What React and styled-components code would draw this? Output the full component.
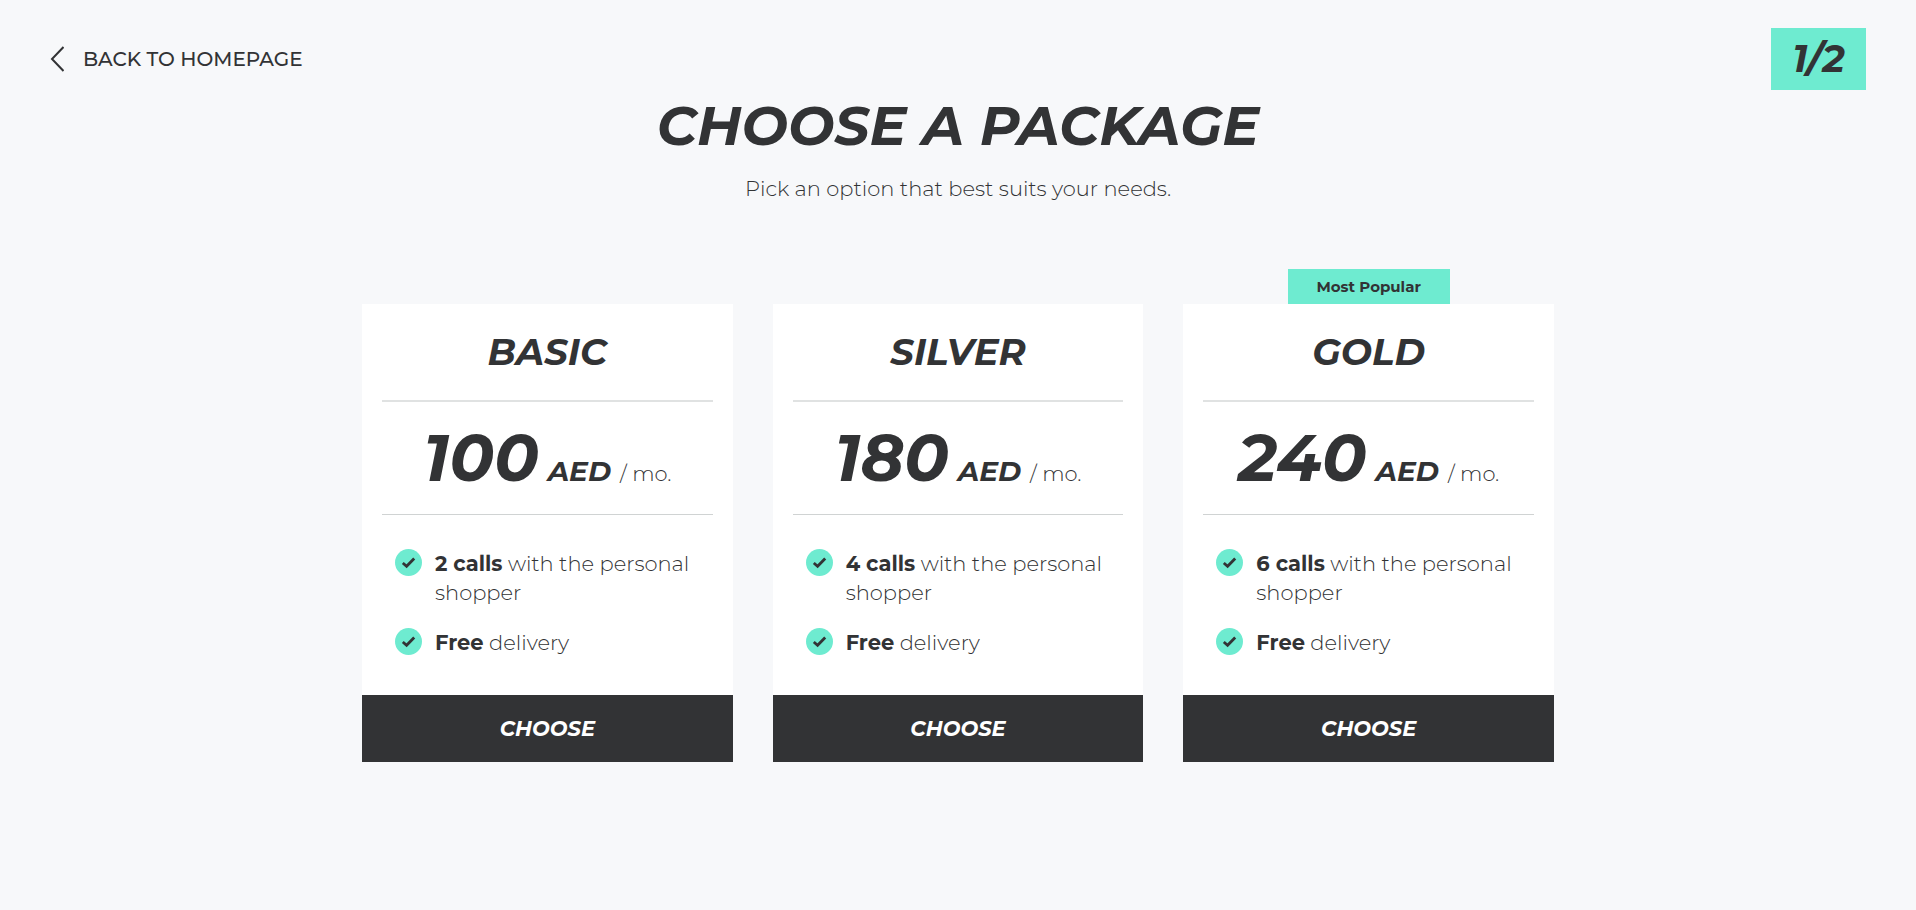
import React from "react";
import styled, { createGlobalStyle } from "styled-components";

const ink = "#323335";
const mint = "#6eebd0";

const GlobalStyle = createGlobalStyle`
  *, *::before, *::after { box-sizing: border-box; }
  body {
    margin: 0;
    background: #f7f8fa;
    color: ${ink};
    font-family: Montserrat, Inter, "Liberation Sans", sans-serif;
  }
`;

const Page = styled.div`
  min-height: 100vh;
  padding-bottom: 48px;
`;

const TopBar = styled.header`
  display: flex;
  justify-content: space-between;
  align-items: center;
  padding: 28px 50px 0;
`;

const BackLink = styled.a`
  display: flex;
  align-items: center;
  gap: 19px;
  color: ${ink};
  font-size: 20px;
  font-weight: 500;
  line-height: 28px;
  text-decoration: none;
`;

const StepBadge = styled.span`
  width: 95px;
  background: ${mint};
  font-size: 38px;
  font-style: italic;
  font-weight: 700;
  line-height: 62px;
  text-align: center;
`;

const Intro = styled.section`
  padding: 4px 24px 0;
  text-align: center;
`;

const Heading = styled.h1`
  margin: 0;
  font-size: 55px;
  font-style: italic;
  font-weight: 700;
  line-height: 64px;
`;

const Lead = styled.p`
  margin: 16px 0 0;
  font-size: 21px;
  font-weight: 300;
  line-height: 30px;
`;

const Packages = styled.main`
  display: grid;
  grid-template-columns: repeat(3, 1fr);
  gap: 40px;
  max-width: 1192px;
  margin: 100px auto 0;
`;

const Card = styled.article`
  position: relative;
  display: flex;
  flex-direction: column;
  background: #fff;
`;

const Ribbon = styled.span`
  position: absolute;
  bottom: 100%;
  left: 50%;
  width: 162px;
  transform: translateX(-50%);
  background: ${mint};
  font-size: 15px;
  font-weight: 700;
  line-height: 35px;
  text-align: center;
`;

const CardName = styled.h2`
  margin: 0 20px;
  border-bottom: 2px solid #e0e2e2;
  font-size: 37px;
  font-style: italic;
  font-weight: 700;
  line-height: 96px;
  text-align: center;
`;

const Price = styled.p`
  display: flex;
  justify-content: center;
  align-items: baseline;
  gap: 9px;
  margin: 0 20px;
  border-bottom: 1px solid #d0d3d3;
  line-height: 28px;
`;

const Amount = styled.strong`
  font-size: 66px;
  font-style: italic;
  font-weight: 700;
  line-height: 112px;
`;

const Currency = styled.strong`
  font-size: 28px;
  font-style: italic;
  font-weight: 700;
`;

const Period = styled.span`
  font-size: 21px;
  font-weight: 300;
`;

const Features = styled.ul`
  display: grid;
  flex: 1;
  align-content: start;
  gap: 21px;
  margin: 0;
  padding: 34px 33px 38px;
  list-style: none;
`;

const Feature = styled.li`
  display: flex;
  align-items: flex-start;
  gap: 13px;
  font-size: 21px;
  font-weight: 300;
  line-height: 29px;

  svg { flex: none; }
  strong { font-weight: 700; }
`;

const ChooseButton = styled.button`
  border: 0;
  padding: 0;
  background: ${ink};
  color: #fff;
  font-family: inherit;
  font-size: 21px;
  font-style: italic;
  font-weight: 700;
  line-height: 67px;
  cursor: pointer;
`;

const packages = [
  { name: "BASIC", price: 100, calls: 2 },
  { name: "SILVER", price: 180, calls: 4 },
  { name: "GOLD", price: 240, calls: 6, popular: true },
];

const ChevronLeft = () => (
  <svg width="14" height="28" viewBox="0 0 14 28" fill="none" stroke={ink} strokeWidth="2" aria-hidden="true">
    <path d="M13.5 2 2 14 13.5 26" />
  </svg>
);

const Check = () => (
  <svg width="27" height="27" viewBox="0 0 27 27" fill="none" aria-hidden="true">
    <circle cx="13.5" cy="13.5" r="13.5" fill={mint} />
    <path d="M7.8 14 11.6 17.3 19.2 9.5" stroke={ink} strokeWidth="2.8" />
  </svg>
);

function PackageCard({ name, price, calls, popular }) {
  return (
    <Card>
      {popular && <Ribbon>Most Popular</Ribbon>}
      <CardName>{name}</CardName>
      <Price>
        <Amount>{price}</Amount>
        <Currency>AED</Currency>
        <Period>/ mo.</Period>
      </Price>
      <Features>
        <Feature>
          <Check />
          <span><strong>{calls} calls</strong> with the personal shopper</span>
        </Feature>
        <Feature>
          <Check />
          <span><strong>Free</strong> delivery</span>
        </Feature>
      </Features>
      <ChooseButton type="button">CHOOSE</ChooseButton>
    </Card>
  );
}

export default function App() {
  return (
    <Page>
      <GlobalStyle />
      <TopBar>
        <BackLink href="#home"><ChevronLeft />BACK TO HOMEPAGE</BackLink>
        <StepBadge>1/2</StepBadge>
      </TopBar>
      <Intro>
        <Heading>CHOOSE A PACKAGE</Heading>
        <Lead>Pick an option that best suits your needs.</Lead>
      </Intro>
      <Packages>
        {packages.map((item) => <PackageCard key={item.name} {...item} />)}
      </Packages>
    </Page>
  );
}
